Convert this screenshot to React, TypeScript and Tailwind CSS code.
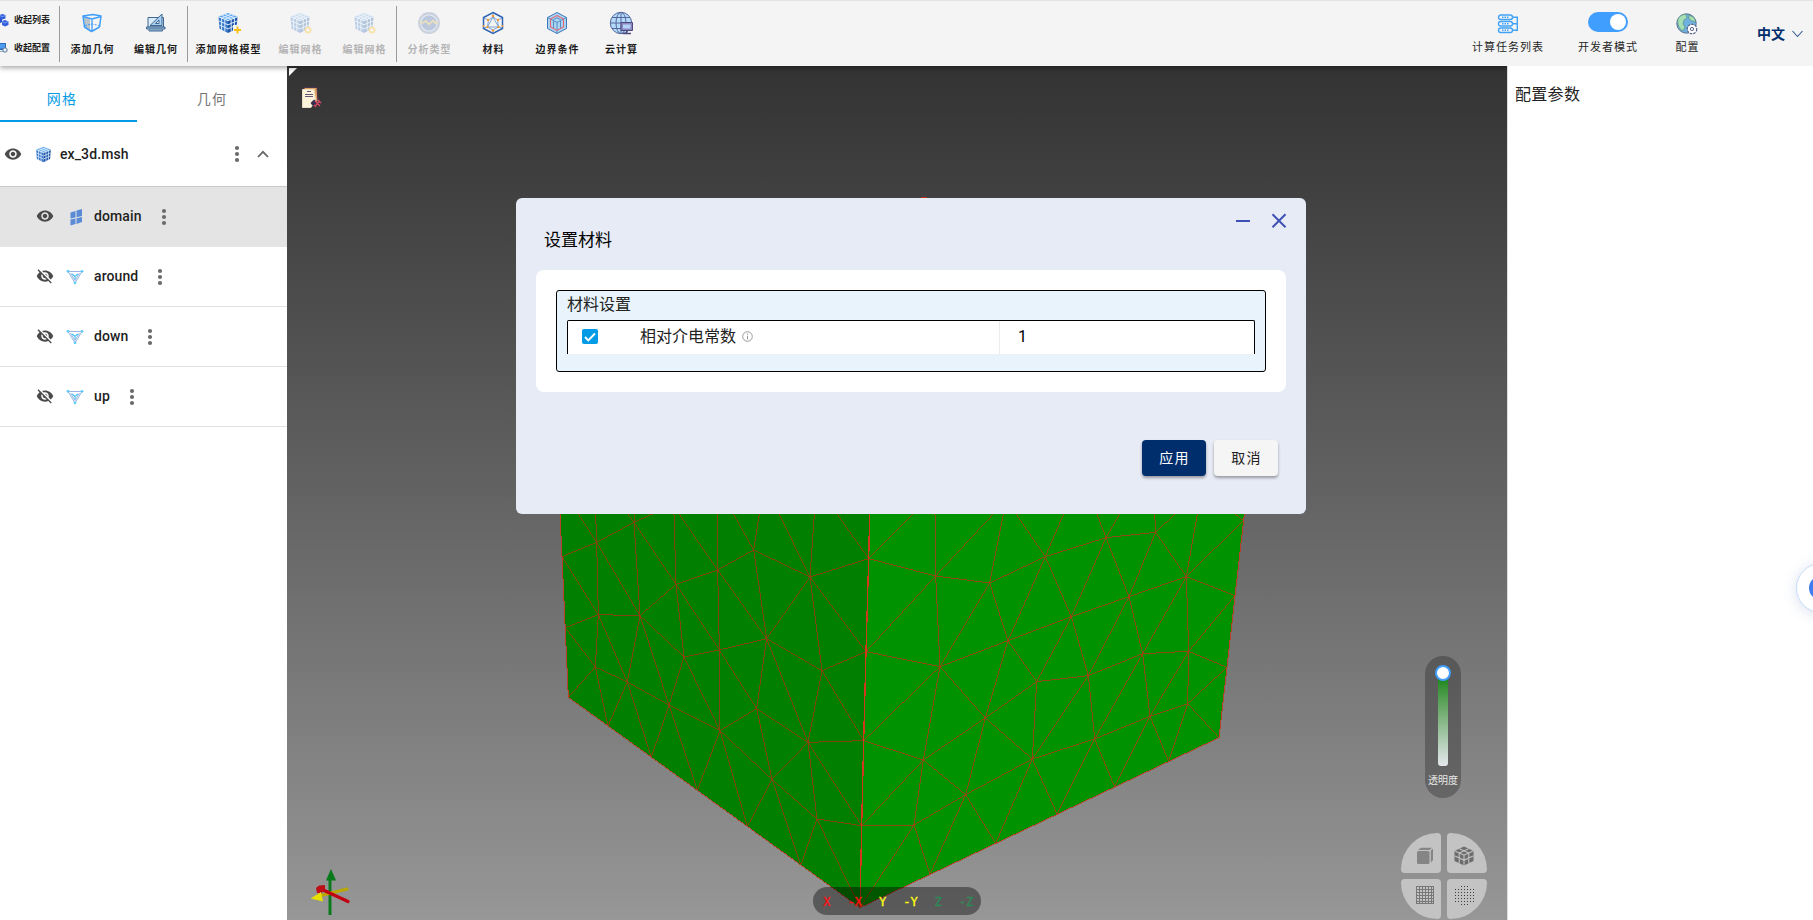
import type { ReactNode } from "react";

const CJK = "font-['Roboto','Noto_Sans_CJK_SC',sans-serif]";

/* ---------- mesh data: three times canvas scale, one origin per face ---------- */

const LEFT_EDGES = `M36 140L140 97L252 37L308 12M85 12L140 97L270 317M137 12L140 97L145 314M253 12V37M233 12L252 37L378 223M252 37L270 317
M36 140L145 314L232 516M372 12L378 223L270 317M378 223L503 180L611 120M378 223L402 441M378 223L508 420M270 317L145 314L46 353
M387 12L503 180M502 12L503 180L508 420M503 180L650 386M550 12L611 120M628 12L611 120L650 386M611 120L780 201L956 146
M687 12L780 201M793 12L780 201L650 386M780 201L816 482M780 201L948 425M861 12L956 146
M270 317L402 441M270 317L232 516M270 317L357 585M145 314L136 471M46 353L136 471L55 562M136 471L232 516L357 585L510 662
M136 471L174 648L232 516L304 742L357 585L442 841L510 662L592 950L666 808L752 1066L801 927
M357 585L402 441L510 662M402 441L508 420L650 386L816 482L948 425M508 420L510 662M508 420L620 596L650 386L774 697
M816 482L941 692M816 482L774 697M510 662L620 596L774 697L941 692M774 697L935 947M774 697L666 808M774 697L801 927
M620 596L666 808M510 662L666 808L801 927L935 947M801 927L930 1193`;

const RIGHT_EDGES = `M158 12L26 146L227 198M225 12L227 198M400 12L227 198L389 219M227 198L240 470M227 198L18 425
M430 12L389 219L556 140M389 219L444 392M389 219L240 470M468 12L556 140M611 12L556 140L738 83M556 140L634 320M556 140L444 392
M711 12L738 83M779 12L738 83L887 67M738 83L807 260M738 83L634 320M884 12L887 67L945 12M887 67L979 200M887 67L807 260
M1012 12L979 200L1150 32M1125 12L1150 32M979 200L1125 257M979 200L986 424M979 200L807 260M979 200L848 431
M807 260L634 320M807 260L685 497M807 260L848 431M634 320L444 392M634 320L530 515M634 320L685 497
M444 392L240 470M444 392L530 515M444 392L376 624M240 470L18 425M240 470L11 692M240 470L376 624M240 470L190 750
M530 515L685 497M530 515L376 624M530 515L517 747M685 497L848 431M685 497L517 747M685 497L704 687
M848 431L986 424M848 431L870 619M848 431L704 687M986 424L1125 257M986 424L1101 472M986 424L983 581M986 424L870 619
M983 581L1101 472M983 581L1077 683M983 581L870 619M983 581L926 754M870 619L764 831M870 619L926 754M870 619L704 687
M704 687L591 912M704 687L764 831M704 687L517 747M517 747L376 624M517 747L407 1000M517 747L591 912M517 747L317 854
M376 624L190 750M376 624L317 854M190 750L11 692M190 750L5 947M190 750L317 854M190 750L162 945
M317 854L162 945M317 854L210 1093M317 854L407 1000M162 945L5 947M162 945L0 1193M162 945L210 1093`;

function MeshCube() {
  return (
    <svg className="absolute inset-0 h-full w-full" viewBox="287 66 1220 854" fill="none" shapeRendering="crispEdges">
      <g transform="translate(550 510) scale(.33333)">
        <path d="M24 -120L30 12L55 562L930 1193L959 12V-120Z" fill="#007f00" />
        <path d={LEFT_EDGES} stroke="#963c12" strokeWidth="2.6" />
        <path d="M30 12L36 140L55 562L930 1193" stroke="#b8402a" strokeWidth="3" />
      </g>
      <g transform="translate(860 510) scale(.33333)">
        <path d="M29 12L0 1193L1077 683L1153 12Z" fill="#009200" />
        <path d={RIGHT_EDGES} stroke="#a53f18" strokeWidth="2.6" />
        <path d="M1153 12L1077 683L0 1193" stroke="#b8402a" strokeWidth="3" />
        <path d="M29 12L26 146L18 425L11 692L5 947L0 1193" stroke="#d2381e" strokeWidth="4" />
      </g>
      <path d="M921 197.500h6" stroke="#b8301c" />
    </svg>
  );
}

/* ---------- toolbar icons ---------- */

function GeometryIcon() {
  return (
    <svg width="22" height="22" viewBox="0 0 22 22" fill="none">
      <path d="M2.500 5L9 7V18.500L4 15Z" fill="#bdc3c9" />
      <path d="M2 4L12 2.500L20 4L18.500 15L10.500 19.500L3.500 15Z" stroke="#3f9dfb" strokeWidth="1.500" strokeLinejoin="round" />
      <path d="M2 4.500L11 7L20 4.500M11 7V19" stroke="#3f9dfb" strokeWidth="1.300" />
      <path d="M4 13.500L11 12L18 13.500" stroke="#3f9dfb" strokeDasharray="2 1.300" />
    </svg>
  );
}

function EditGeometryIcon() {
  return (
    <svg width="22" height="22" viewBox="0 0 22 22" fill="none" stroke="#41668f" strokeWidth="1">
      <path d="M3 5.500H18.500V15H3Z" fill="#d7ebfa" />
      <path d="M1.500 15H20V17H1.500ZM4 17.500V19H17.500V17.500" fill="#93bddd" />
      <path d="M17 2V13.500H5Z" fill="#a9d1f4" />
      <path d="M14 8V11.500H10.500Z" fill="#eef6fc" />
    </svg>
  );
}

function CubeGrid({ size = 22 }: { size?: number }) {
  return (
    <svg width={size} height={size} viewBox="0 0 22 22" fill="none">
      <path d="M11 1L20.500 4.500L11 8.500L1.500 4.500Z" fill="#64a9ee" />
      <path d="M1.500 5L11 8.700V21L2.500 16.800Z" fill="#3a78c8" />
      <path d="M20.500 5L11 8.700V21L19.500 16.800Z" fill="#1f54a6" />
      <path d="M4.700 3.300L14.200 7.200V19.500M7.800 2.100L17.400 6V18M14.200 2.100L4.600 6V18M17.300 3.300L7.800 7.200V19.500M2 9L11 12.800L20 9M2.500 13L11 16.900L19.500 13M1.500 4.800L11 8.600L20.500 4.800" stroke="#d8ecfd" strokeWidth="1" />
    </svg>
  );
}

function MeshAddIcon() {
  return (
    <span className="relative">
      <CubeGrid />
      <svg className="absolute right-[-3px] bottom-0" width="9" height="9" viewBox="0 0 9 9">
        <rect width="9" height="9" fill="#f4f4f4" />
        <path d="M4.500 1.500V8.500M1 5H8" stroke="#fbbf14" strokeWidth="1.800" />
      </svg>
    </span>
  );
}

function MeshEditIcon() {
  return (
    <span className="relative opacity-30">
      <CubeGrid />
      <svg className="absolute right-[-1px] bottom-0" width="8" height="8" viewBox="0 0 8 8" fill="#fff" stroke="#fbbf14" strokeWidth="2">
        <circle cx="4" cy="4" r="2.500" />
      </svg>
    </span>
  );
}

function AnalysisIcon() {
  return (
    <svg className="opacity-35" width="24" height="24" viewBox="0 0 24 24" fill="none">
      <circle cx="12" cy="12" r="10" fill="#5578b4" stroke="#8494b4" strokeWidth="2" />
      <circle cx="12" cy="12" r="8.200" stroke="#c9d8ee" strokeWidth="1.200" />
      <path d="M3 10.500L6 12L9 10L12 13.500L16 9.500L18 12L21 11" stroke="#f2c14a" strokeWidth="1.500" />
    </svg>
  );
}

function MaterialIcon() {
  return (
    <svg width="24" height="24" viewBox="0 0 24 24" fill="none">
      <path d="M12 1.500L21.500 6.500V17.500L12 22.500L2.500 17.500V6.500Z" stroke="#2d62b4" strokeWidth="1.500" />
      <path d="M12 6L17.500 16H6.500ZM12 2V6M2.500 7L7.500 9L12 6L16.500 9L21.500 7M6.500 16L2.500 17M17.500 16L21.500 17M7.500 9L6.500 16L12 19L17.500 16L16.500 9M12 19V22" stroke="#5e8fd2" strokeWidth=".8" />
      <g fill="#f39c32">
        <circle cx="12" cy="5" r="1.300" />
        <circle cx="7" cy="9" r="1.200" />
        <circle cx="17" cy="9" r="1.200" />
        <circle cx="6.500" cy="16" r="1.200" />
        <circle cx="17.500" cy="16" r="1.200" />
        <circle cx="12" cy="19.500" r="1.300" />
        <circle cx="2.500" cy="15" r="1" />
        <circle cx="21.500" cy="15" r="1" />
      </g>
    </svg>
  );
}

function BoundaryIcon() {
  return (
    <svg width="24" height="24" viewBox="0 0 24 24" fill="none">
      <path d="M12 1.500L21.500 6.500V17.500L12 22.500L2.500 17.500V6.500Z" fill="#a9d4f3" stroke="#3f78b8" />
      <path d="M2.500 6.500L12 11.500L21.500 6.500M12 11.500V22.500M8.500 10V17M15.500 10V17M8.500 8.500L12 6.800L15.500 8.500" stroke="#4b86c2" strokeWidth=".9" />
      <path d="M12 4.500L18.500 8V16L12 19.500L5.500 16V8Z" stroke="#e4676f" strokeWidth="1.100" />
    </svg>
  );
}

function CloudIcon() {
  return (
    <svg width="24" height="24" viewBox="0 0 24 24" fill="none" stroke="#54679c" strokeWidth="1">
      <circle cx="12" cy="12" r="10.700" fill="#b4dafa" />
      <ellipse cx="12" cy="12" rx="5" ry="10.700" />
      <path d="M12 1V22M1.500 12H22M3 6.500H21M3 17.500H14" />
      <path d="M12 11.500H23.500V19.500H12Z" fill="#8e87c0" stroke="#4d4a80" />
      <path d="M14 13.500H21.500V17.500H14Z" fill="#b3d5fa" stroke="none" />
      <path d="M14 22.500H22M17.700 20V22" stroke="#4d4a80" strokeWidth="1.400" />
    </svg>
  );
}

function TaskIcon() {
  return (
    <svg width="22" height="20" viewBox="0 0 22 20" fill="none" stroke="#41a3f8" strokeWidth="1.400">
      <rect x="1.500" y="1" width="14" height="4.500" rx="2.200" />
      <rect x="1.500" y="7.500" width="14" height="4.500" rx="2.200" />
      <rect x="1.500" y="14" width="14" height="4.500" rx="2.200" />
      <path d="M5 3.200H12M5 9.700H12M5 16.200H12" strokeDasharray="1.500 1" />
      <path d="M16 3.200H20.300V16.200H16M16 9.700H20" />
    </svg>
  );
}

function GlobeGearIcon() {
  return (
    <svg width="22" height="22" viewBox="0 0 22 22" fill="none">
      <circle cx="10.500" cy="10.500" r="9.700" fill="#6fb2e2" stroke="#57718f" />
      <path d="M2 6C4 2 8 1 10 1.500L11 5L8 7L7 11L9 14L7 18C3 16 1 11 2 6ZM13 2L18 4.500L20 9L16 8L13 6Z" fill="#a5dfb4" stroke="#5b8c84" strokeWidth=".7" />
      <circle cx="16" cy="16" r="4.600" fill="#fff" stroke="#5b6488" strokeWidth="1.500" strokeDasharray="2.400 1" />
      <circle cx="16" cy="16" r="3.900" fill="#fff" />
      <circle cx="16" cy="16" r="1.600" stroke="#5b6488" />
    </svg>
  );
}

function ClusterIcon() {
  return (
    <svg width="13" height="13" viewBox="0 0 13 13">
      <path d="M-1 5L3 3L6 5V8L3 10L-1 8Z" fill="#2b52cc" />
      <path d="M3.500 1L6.500 0L9.500 1V4.500L6.500 5.500L3.500 4.500ZM6 7L9 6L12.500 7.500V11L9 12.500L6 11Z" fill="#3460e0" />
      <path d="M3.500 1.500L6.500 2.500L9.500 1.500M6 7.500L9 9L12 7.500" stroke="#9db9f8" strokeWidth=".7" fill="none" />
    </svg>
  );
}

function ScreenIcon() {
  return (
    <svg width="12" height="12" viewBox="0 0 12 12">
      <path d="M-3 1H8V8H-3Z" fill="#336ab8" />
      <path d="M-1 2H7V6.500H-1Z" fill="#4c9df2" />
      <path d="M0 9H6V10H0Z" fill="#8ea9c9" />
      <circle cx="7" cy="8" r="2.200" fill="#e6effb" stroke="#5a7396" />
    </svg>
  );
}

/* ---------- shared glyphs ---------- */

function Eye({ off = false }: { off?: boolean }) {
  return (
    <svg width="18" height="18" viewBox="0 0 24 24" fill="#4a4a4a">
      {off ? (
        <path d="M12 7c2.760 0 5 2.240 5 5 0 .65-.13 1.260-.36 1.830l2.920 2.920c1.510-1.260 2.700-2.890 3.430-4.750-1.730-4.390-6-7.500-11-7.500-1.400 0-2.740.25-3.980.7l2.160 2.160C10.740 7.130 11.350 7 12 7zM2 4.270l2.280 2.280.46.46C3.080 8.300 1.780 10.020 1 12c1.730 4.390 6 7.500 11 7.500 1.550 0 3.030-.3 4.380-.84l.42.42L19.730 22 21 20.730 3.270 3 2 4.270zM7.530 9.800l1.550 1.550c-.05.21-.08.43-.08.65 0 1.660 1.340 3 3 3 .22 0 .44-.03.65-.08l1.550 1.550c-.67.33-1.410.53-2.200.53-2.760 0-5-2.240-5-5 0-.79.2-1.530.53-2.200zm4.310-.78l3.150 3.150.02-.16c0-1.660-1.340-3-3-3l-.17.01z" />
      ) : (
        <path d="M12 4.500C7 4.500 2.730 7.610 1 12c1.730 4.390 6 7.500 11 7.500s9.270-3.110 11-7.500c-1.730-4.390-6-7.500-11-7.500zM12 17c-2.760 0-5-2.240-5-5s2.240-5 5-5 5 2.240 5 5-2.240 5-5 5zm0-8c-1.660 0-3 1.340-3 3s1.340 3 3 3 3-1.340 3-3-1.340-3-3-3z" />
      )}
    </svg>
  );
}

function Dots() {
  return (
    <svg width="6" height="18" viewBox="0 0 6 18" fill="#6b6b6b">
      <circle cx="3" cy="3" r="2.100" />
      <circle cx="3" cy="9" r="2.100" />
      <circle cx="3" cy="15" r="2.100" />
    </svg>
  );
}

function VolumeIcon() {
  return (
    <svg width="14" height="18" viewBox="0 0 14 18" fill="#5b8bd6">
      <path d="M.5 4.500L5.500 3V9.500L.5 10.500ZM6.500 2.500L12 1V8L6.500 9.200ZM.5 11.500L5.500 10.500V16L.5 17.500ZM6.500 10.300L12 9V14L6.500 16Z" />
    </svg>
  );
}

function SurfaceIcon() {
  return (
    <svg width="18" height="16" viewBox="0 0 18 16" fill="none">
      <path d="M2 2.500H16L9 14ZM4.500 4L9 11.500L13.500 4" stroke="#8fade0" strokeWidth=".9" />
      <path d="M6 5L9 7.200L12 5M9 7.200V10.500" stroke="#4cc3f5" strokeWidth="1.200" />
      <g fill="#5ecbfa">
        <circle cx="2" cy="2.300" r="1.400" />
        <circle cx="16" cy="2.300" r="1.400" />
        <circle cx="9" cy="13.800" r="1.400" />
      </g>
    </svg>
  );
}

/* ---------- toolbar ---------- */

function Tool({ icon, label, width = "w-16", muted = false }: { icon: ReactNode; label: string; width?: string; muted?: boolean }) {
  return (
    <div className={`flex shrink-0 flex-col items-center ${width}`}>
      <div className="flex h-6 items-center justify-center">{icon}</div>
      <span className={`mt-[7px] whitespace-nowrap pl-px text-[10px] leading-4 font-bold tracking-[1px] ${muted ? "text-[#b4b4b4]" : "text-[#1c1c1c]"}`}>{label}</span>
    </div>
  );
}

function Rule() {
  return <div className="-mt-[5px] h-14 w-px shrink-0 bg-[#9a9a9a]" />;
}

function Toolbar() {
  return (
    <header className="relative z-20 flex h-[66px] w-full shrink-0 items-start border-t border-[#e2e4e4] bg-[#f4f4f4] pt-[10px] shadow-[0_2px_5px_rgba(0,0,0,0.35)]">
      <div className="flex w-[59px] shrink-0 flex-col gap-3 pt-px text-[9px] leading-4 font-bold text-[#1c1c1c]">
        <div className="-ml-1 flex h-4 items-center whitespace-nowrap">
          <ClusterIcon />
          <span className="ml-[5px]">收起列表</span>
        </div>
        <div className="-ml-[2px] flex h-4 items-center whitespace-nowrap">
          <ScreenIcon />
          <span className="ml-[4px]">收起配置</span>
        </div>
      </div>
      <Rule />
      <Tool icon={<GeometryIcon />} label="添加几何" />
      <Tool icon={<EditGeometryIcon />} label="编辑几何" width="w-[63px]" />
      <Rule />
      <Tool icon={<MeshAddIcon />} label="添加网格模型" width="w-20" />
      <Tool icon={<MeshEditIcon />} label="编辑网格" muted />
      <Tool icon={<MeshEditIcon />} label="编辑网格" muted />
      <Rule />
      <Tool icon={<AnalysisIcon />} label="分析类型" muted />
      <Tool icon={<MaterialIcon />} label="材料" />
      <Tool icon={<BoundaryIcon />} label="边界条件" />
      <Tool icon={<CloudIcon />} label="云计算" />
      <div className="ml-auto flex pr-[10px] text-[11px] leading-4 tracking-[1px] text-[#262626]">
        <div className="flex w-[92px] flex-col items-center">
          <div className="mt-px flex h-6 items-center"><TaskIcon /></div>
          <span className="mt-1">计算任务列表</span>
        </div>
        <div className="flex w-[108px] flex-col items-center">
          <div className="mt-px flex h-5 w-10 items-center justify-end rounded-full bg-[#409eff] p-[2px]">
            <div className="h-4 w-4 rounded-full bg-white" />
          </div>
          <span className="mt-[8px]">开发者模式</span>
        </div>
        <div className="flex w-[50px] flex-col items-center">
          <div className="mt-px flex h-6 items-center"><GlobeGearIcon /></div>
          <span className="mt-[4px] pl-px">配置</span>
        </div>
        <div className="mt-[13px] ml-[45px] flex h-5 items-center text-[14px] font-bold tracking-normal text-[#002e6d]">
          中文
          <svg className="ml-[7px]" width="11" height="8" viewBox="0 0 11 8" fill="none" stroke="#335a8e" strokeWidth="1.100">
            <path d="M.5 1L5.500 6.500L10.500 1" />
          </svg>
        </div>
      </div>
    </header>
  );
}

/* ---------- sidebar ---------- */

function MeshRow({ name, active = false }: { name: string; active?: boolean }) {
  return (
    <div className={`flex h-[60px] items-center border-b pl-9 ${active ? "border-[#e4e4e4] bg-[#e4e4e4]" : "border-[#e2e2e2]"}`}>
      <span className="-mt-px"><Eye off={!active} /></span>
      <div className="ml-[12px] flex w-[18px] justify-center">{active ? <span className="ml-[4px]"><VolumeIcon /></span> : <SurfaceIcon />}</div>
      <span className="ml-[10px] text-[14px] font-medium tracking-[0.1px] text-[#1f1f1f]">{name}</span>
      <span className="ml-[19px]"><Dots /></span>
    </div>
  );
}

function Sidebar() {
  return (
    <aside className="w-[287px] shrink-0 bg-white">
      <div className="flex h-14 text-[14px] tracking-[1.250px]">
        <div className="flex w-[137px] items-center justify-center border-b-2 border-[#039be5] pr-[13px] pt-[12px] text-[#039be5]">网格</div>
        <div className="flex w-[150px] items-center justify-center pt-[10px] text-[#757575]">几何</div>
      </div>
      <div className="flex h-[65px] items-center border-b border-[#c9c9c9] pl-1">
        <Eye />
        <span className="ml-[13px]"><CubeGrid size={17} /></span>
        <span className="ml-2 text-[14px] font-medium tracking-[0.1px] text-[#1f1f1f]">ex_3d.msh</span>
        <span className="ml-auto"><Dots /></span>
        <svg className="ml-[17px] mr-[18px]" width="12" height="8" viewBox="0 0 12 8" fill="none" stroke="#666" strokeWidth="1.800">
          <path d="M1 7L6 1.800L11 7" />
        </svg>
      </div>
      <MeshRow name="domain" active />
      <MeshRow name="around" />
      <MeshRow name="down" />
      <MeshRow name="up" />
    </aside>
  );
}

/* ---------- canvas overlays ---------- */

function Dialog() {
  return (
    <section className="absolute left-[229px] top-[132px] flex h-[316px] w-[790px] flex-col rounded-[6px] bg-[#e7ebf6] px-5 text-black">
      <div className="-mr-[1px] flex h-[34px] items-end justify-end gap-[20px] pt-3">
        <svg width="16" height="16" viewBox="0 0 16 16" stroke="#3f51b5" strokeWidth="2"><path d="M1 5H15" /></svg>
        <svg className="overflow-visible" width="16" height="16" viewBox="0 0 16 16" stroke="#3f51b5" strokeWidth="2"><path d="M1.500 -1.700L14.500 11.300M14.500 -1.700L1.500 11.300" /></svg>
      </div>
      <h2 className="h-[38px] pl-[8px] text-[17px] leading-4 font-normal">设置材料</h2>
      <div className="h-[122px] rounded-[8px] bg-white p-5">
        <div className="h-[82px] rounded-[3px] border border-black bg-[#e8f3fc] px-[10px]">
          <div className="h-[29px] pt-[2px] text-[16px] leading-6 text-[#222]">材料设置</div>
          <div className="flex h-[34px] items-center rounded-t-[2px] border border-b-0 border-black bg-white pb-[2px] text-[16px] text-[#222]">
            <div className="ml-[14px] flex h-[15px] w-[16px] items-center justify-center rounded-[2px] bg-[#039be5]">
              <svg width="12" height="10" viewBox="0 0 12 10" fill="none" stroke="#fff" strokeWidth="1.900"><path d="M1 5L4.300 8.300L11 1.500" /></svg>
            </div>
            <span className="ml-[42px]">相对介电常数</span>
            <svg className="ml-[6px]" width="11" height="11" viewBox="0 0 11 11" fill="none" stroke="#9a9a9a">
              <circle cx="5.500" cy="5.500" r="4.800" />
              <path d="M5.500 2.500V3.700M5.500 4.800V8.500" />
            </svg>
            <div className="-mb-[2px] ml-auto flex h-[33px] w-[255px] items-center border-l border-[#ececec] pb-[2px] pl-[18px] text-black">1</div>
          </div>
        </div>
      </div>
      <div className="mr-2 mt-12 flex justify-end gap-2 text-[14px] tracking-[1.250px]">
        <button className="h-9 w-16 rounded-[4px] bg-[#002e6d] pt-px pl-px text-white shadow-[0_2px_3px_rgba(0,0,0,0.35)]">应用</button>
        <button className="h-9 w-16 rounded-[4px] bg-[#f5f5f5] pt-px pl-px text-[#222] shadow-[0_2px_3px_rgba(0,0,0,0.35)]">取消</button>
      </div>
    </section>
  );
}

const AXES = [
  ["X", "text-[#ff1010]"],
  ["-X", "text-[#ff1010]"],
  ["Y", "text-[#ffff10]"],
  ["-Y", "text-[#ffff10]"],
  ["Z", "text-[#2e8b57]"],
  ["-Z", "text-[#2e8b57]"],
];

function AxisBar() {
  return (
    <div className="absolute left-[526px] top-[821px] flex h-7 w-[168px] items-center rounded-full bg-black/40 pt-px pr-px font-['DejaVu_Sans_Mono',monospace] text-[12px] [-webkit-text-stroke:0.3px]">
      {AXES.map(([label, tone]) => (
        <span key={label} className={`w-7 text-center ${tone}`}>{label}</span>
      ))}
    </div>
  );
}

function OpacitySlider() {
  return (
    <div className="absolute left-[1138px] top-[590px] flex h-[142px] w-9 flex-col items-center rounded-full bg-black/25 pt-[9px]">
      <div className="z-10 h-4 w-4 shrink-0 rounded-full border-[2px] border-[#409eff] bg-white" />
      <div className="-mt-1 h-[89px] w-[10px] shrink-0 rounded-b-[3px] bg-linear-to-b from-[#0e860e] to-[#e4e7ed]" />
      <span className="mt-[7px] whitespace-nowrap text-[10px] leading-4 text-[#e8e8e8]">透明度</span>
    </div>
  );
}

const DOT_ROWS = [1, 4, 7, 10, 13, 16, 19];

function ViewModes() {
  return (
    <div className="absolute left-[1114px] top-[767px] grid grid-cols-[40px_40px] grid-rows-[40px_40px] gap-[6px] *:flex *:items-center *:justify-center *:bg-[#c3c3c3]">
      <div className="rounded-[4px] rounded-tl-[40px] pt-[6px] pl-[7px]">
        <svg width="18" height="18" viewBox="0 0 18 18" fill="#858585">
          <rect x="1" y="4" width="12.500" height="13" rx="1.500" />
          <path d="M2 3L5 .8H16L13.500 3ZM14.800 3.800L17 1.500V13L14.800 15.500Z" />
        </svg>
      </div>
      <div className="rounded-[4px] rounded-tr-[40px] pt-[6px] pr-[7px]">
        <svg width="20" height="20" viewBox="0 0 20 20" fill="#6c6c6c">
          <path d="M10 .5L19.500 5V15L10 19.500L.5 15V5Z" />
          <path d="M1 5L10 9.200L19 5M10 9.200V19.500M5.500 2.800L14.800 7V17.500M14.500 2.800L5.200 7V17.500M1 10L10 14.300L19 10" stroke="#c3c3c3" strokeWidth="1.100" fill="none" />
        </svg>
      </div>
      <div className="rounded-[4px] rounded-bl-[40px] pb-[9px] pl-[7px]">
        <svg width="18" height="18" viewBox="0 0 18 18" fill="none" stroke="#777" shapeRendering="crispEdges">
          <path d="M.5 .5H17.500V17.500H.5ZM3.500 0V18M6.500 0V18M9.500 0V18M12.500 0V18M15.500 0V18M0 3.500H18M0 6.500H18M0 9.500H18M0 12.500H18M0 15.500H18" />
        </svg>
      </div>
      <div className="rounded-[4px] rounded-br-[40px] pb-[7px] pr-[5px]">
        <svg width="20" height="20" viewBox="0 0 20 20" stroke="#3c3c3c" strokeDasharray="1 2" shapeRendering="crispEdges">
          {DOT_ROWS.map((y, i) => (
            <path key={y} d={i === 0 || i === 6 ? `M6 ${y - 0.5}H15` : `M0 ${y - 0.5}H20`} />
          ))}
        </svg>
      </div>
    </div>
  );
}

function AxesTriad() {
  return (
    <svg className="absolute left-[22px] top-[802px]" width="42" height="50" viewBox="309 868 42 50">
      <path d="M330 915V880" stroke="#0b7a1e" strokeWidth="3" />
      <path d="M331 869L336 880.500H326Z" fill="#087a1a" />
      <path d="M319 896L347 889" stroke="#b9a800" strokeWidth="3" strokeLinecap="round" />
      <path d="M321 889L348 901.500" stroke="#c00010" strokeWidth="3.200" strokeLinecap="round" />
      <path d="M316 888L319 885.500L325 885L325 889L321 893.500L317 893Z" fill="#bd0f18" />
      <path d="M310.500 898.500L321 892L323 901.500Z" fill="#e8e000" />
    </svg>
  );
}

function NotesIcon() {
  return (
    <svg className="absolute left-[13px] top-[20px]" width="22" height="24" viewBox="0 0 22 24">
      <path d="M4 1.500H17L18 16L4 20Z" fill="#e0a060" stroke="#4a3550" />
      <path d="M2.500 3.500H14L15.500 14L11 21.500H2.500Z" fill="#fdf3da" stroke="#eadfc4" />
      <path d="M5 8.500H13M5 10.500H13M7 5.500H11" stroke="#625875" />
      <path d="M10.500 17L14 13.500L17 16L15 21L12 19Z" fill="#342f4e" />
      <path d="M15 15L20 20M18 14L21 17M14 19L16 21M15 20L20 15" stroke="#e04a66" strokeWidth="1.300" />
    </svg>
  );
}

function Viewport() {
  return (
    <main className="relative w-[1220px] shrink-0 overflow-hidden bg-linear-to-b from-[#333] to-[#979797]">
      <MeshCube />
      <div className="absolute left-[2px] top-[2px] h-2 w-2 bg-white [clip-path:polygon(0_0,100%_0,0_100%)]" />
      <NotesIcon />
      <AxesTriad />
      <AxisBar />
      <OpacitySlider />
      <ViewModes />
      <Dialog />
    </main>
  );
}

export default function App() {
  return (
    <div className={`relative flex h-[920px] w-[1813px] flex-col overflow-hidden bg-white ${CJK}`}>
      <Toolbar />
      <div className="flex min-h-0 flex-1">
        <Sidebar />
        <Viewport />
        <aside className="relative z-30 flex-1 border-l border-[#ddd] bg-white pt-[17px] pl-[7px] text-[16px] leading-6 tracking-[0.3px] text-[#222]">配置参数</aside>
      </div>
      <div className="absolute left-[1796px] top-[563px] z-40 flex h-[50px] w-[50px] items-center justify-center rounded-full border border-[#c5dcfd] bg-white shadow-[0_2px_14px_rgba(60,90,160,0.18)]">
        <div className="h-6 w-6 rounded-full border-[4px] border-[#3f7df0] bg-[#7fa9f5]" />
      </div>
    </div>
  );
}
